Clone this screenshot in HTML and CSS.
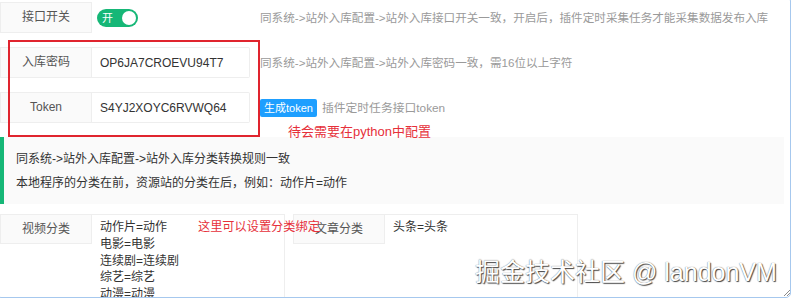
FILE: index.html
```html
<!DOCTYPE html>
<html lang="zh-CN">
<head>
<meta charset="UTF-8">
<meta name="viewport" content="width=device-width, initial-scale=1.0">
<title>站外入库配置</title>
<link rel="stylesheet" href="styles.css">
</head>
<body>
<div class="frame">
  <form class="pane">
    <div class="item">
      <label class="label">接口开关</label>
      <div class="block block-switch">
        <span class="switch"><em>开</em><i></i></span>
      </div>
      <div class="aux">同系统-&gt;站外入库配置-&gt;站外入库接口开关一致，开启后，插件定时采集任务才能采集数据发布入库</div>
    </div>
    <div class="item">
      <label class="label">入库密码</label>
      <div class="block">
        <input class="input" type="text" value="OP6JA7CROEVU94T7">
      </div>
      <div class="aux">同系统-&gt;站外入库配置-&gt;站外入库密码一致，需16位以上字符</div>
    </div>
    <div class="item">
      <label class="label">Token</label>
      <div class="block">
        <input class="input" type="text" value="S4YJ2XOYC6RVWQ64">
      </div>
      <div class="aux"><button class="btn" type="button">生成token</button><span class="aux-text">插件定时任务接口token</span></div>
    </div>
    <blockquote class="quote">
      同系统-&gt;站外入库配置-&gt;站外入库分类转换规则一致<br>
      本地程序的分类在前，资源站的分类在后，例如：动作片=动作
    </blockquote>
    <div class="item item-cats">
      <label class="label">视频分类</label>
      <textarea class="textbox" readonly>动作片=动作
电影=电影
连续剧=连续剧
综艺=综艺
动漫=动漫
纪录片=纪录片</textarea>
      <label class="label label-gap">文章分类</label>
      <textarea class="textbox" readonly>头条=头条</textarea>
    </div>
  </form>

  <!-- annotations drawn over the form -->
  <div class="mark-box"></div>
  <span class="note note-python">待会需要在python中配置</span>
  <span class="note note-cat">这里可以设置分类绑定</span>
  <span class="watermark">掘金技术社区 @ landonVM</span>
  <svg class="grip" width="7" height="7" viewBox="0 0 7 7">
    <path d="M1 7 L7 1 M4 7 L7 4" stroke="#8a8a8a" stroke-width="1" fill="none"/>
  </svg>
</div>
</body>
</html>
```

FILE: styles.css
```css
body {
  margin: 0;
  background: #ffffff;
  font-family: "Liberation Sans", "Noto Sans CJK SC", sans-serif;
  overflow: hidden;
}
.frame {
  position: relative;
  box-sizing: border-box;
  width: 795px;
  height: 302px;
  margin: -4px 0 0 -4px;
  padding: 5px 0 0 3px;
  border: 1px solid #a6c8ee;
  border-radius: 5px;
  overflow: hidden;
  background: #ffffff;
}
.pane {
  margin: 0;
}
.item {
  display: flex;
  align-items: center;
  height: 31px;
  margin-bottom: 14px;
}
.label {
  box-sizing: border-box;
  flex: none;
  width: 92px;
  height: 31px;
  line-height: 29px;
  border: 1px solid #eeeeee;
  background: #fafafa;
  color: #555;
  font-size: 12px;
  text-align: center;
}
.block {
  flex: none;
  width: 158px;
  height: 31px;
  display: flex;
  align-items: center;
}
.block-switch {
  padding-left: 5px;
  box-sizing: border-box;
}
.input {
  box-sizing: border-box;
  width: 158px;
  height: 31px;
  margin: 0;
  padding: 0 8px;
  border: 1px solid #eeeeee;
  border-left: none;
  border-radius: 0 2px 2px 0;
  font-family: "Liberation Sans", "Noto Sans CJK SC", sans-serif;
  font-size: 12px;
  color: #333;
  outline: none;
}
.switch {
  position: relative;
  display: inline-block;
  box-sizing: border-box;
  width: 41px;
  height: 18px;
  border-radius: 9px;
  background: #16b777;
}
.switch em {
  position: absolute;
  left: 5px;
  top: 0;
  font-style: normal;
  font-size: 11px;
  line-height: 18px;
  color: #fff;
}
.switch i {
  position: absolute;
  right: 2px;
  top: 2px;
  width: 14px;
  height: 14px;
  border-radius: 50%;
  background: #fff;
}
.aux {
  margin-left: 10px;
  display: flex;
  align-items: center;
  font-size: 11.6px;
  line-height: 18px;
  color: #9a9a9a;
  white-space: nowrap;
}
.aux-text {
  font-size: 11.8px;
}
.btn {
  height: 18px;
  margin: 0 5px 0 0;
  padding: 0 4px;
  border: none;
  border-radius: 2px;
  background: #1e9fff;
  color: #fff;
  font-family: "Liberation Sans", "Noto Sans CJK SC", sans-serif;
  font-size: 11px;
  line-height: 18px;
}
.quote {
  margin: 1px 6px 0 0;
  padding: 10px 12px 9px;
  border-left: 4px solid #16b777;
  background: #fafafa;
  font-size: 12px;
  line-height: 24px;
  color: #333;
}
.item-cats {
  align-items: flex-start;
  height: auto;
  margin-top: 10px;
}
.item-cats .label {
  height: 30px;
  line-height: 28px;
}
.label-gap {
  margin-left: 8px;
}
.textbox {
  box-sizing: border-box;
  flex: none;
  width: 193px;
  height: 110px;
  margin: 0;
  padding: 4px 8px;
  border: 1px solid #eeeeee;
  border-left: none;
  resize: none;
  overflow: hidden;
  font-family: "Liberation Sans", "Noto Sans CJK SC", sans-serif;
  font-size: 12px;
  line-height: 16.8px;
  color: #333;
  outline: none;
}
.mark-box {
  position: absolute;
  left: 11px;
  top: 43px;
  width: 252px;
  height: 97px;
  box-sizing: border-box;
  border: 2px solid #e0242e;
}
.note {
  position: absolute;
  color: #e6303a;
  white-space: nowrap;
  line-height: 16px;
}
.note-python {
  left: 291px;
  top: 127px;
  font-size: 13px;
}
.note-cat {
  left: 201px;
  top: 222px;
  font-size: 12.2px;
}
.watermark {
  position: absolute;
  left: 478px;
  top: 260px;
  font-size: 25px;
  line-height: 30px;
  color: #ffffff;
  white-space: nowrap;
  text-shadow: 0 0 1px #555, 1px 1px 1px #444;
}
.grip {
  position: absolute;
  left: 786px;
  top: 292px;
}
```
